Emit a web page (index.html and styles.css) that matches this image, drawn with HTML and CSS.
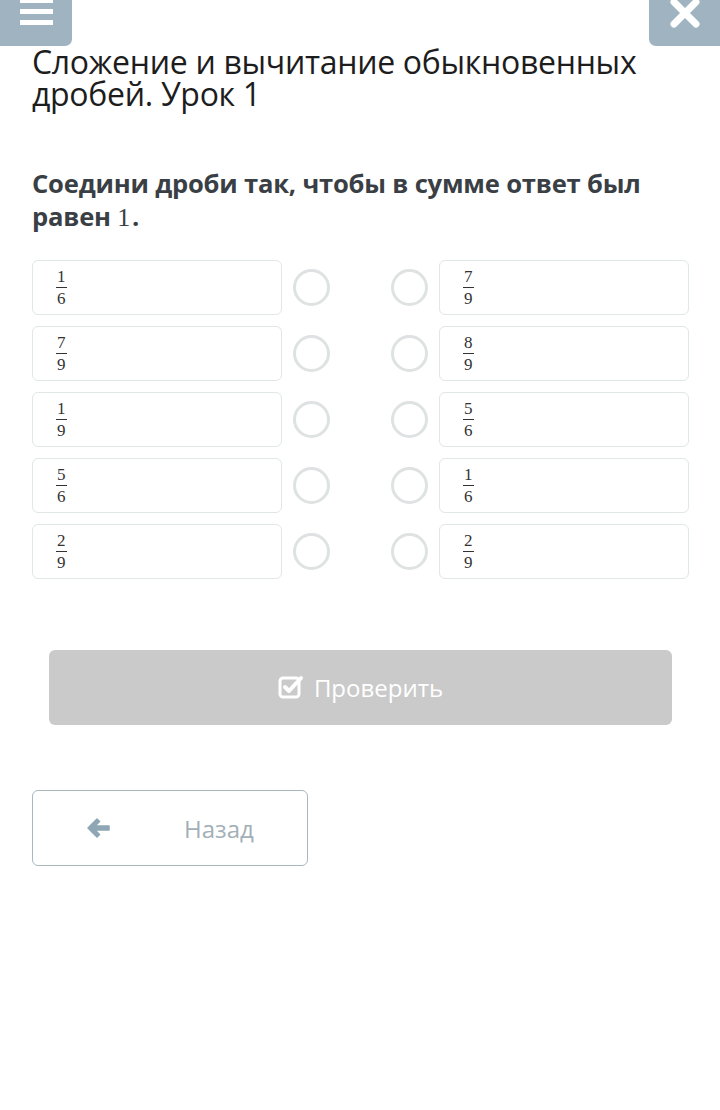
FILE: index.html
```html
<!DOCTYPE html>
<html lang="ru">
<head>
<meta charset="utf-8">
<link rel="stylesheet" href="styles.css">
</head>
<body>
<div class="topbar">
  <div class="tb-btn tb-left">
    <svg width="72" height="46" viewBox="0 0 72 46"><rect x="20" y="-2" width="33" height="5" fill="#fff"/><rect x="20" y="9" width="33" height="5" fill="#fff"/><rect x="20" y="20" width="33" height="5" fill="#fff"/></svg>
  </div>
  <div class="tb-btn tb-right">
    <svg width="71" height="46" viewBox="0 0 71 46"><path d="M25 2 L47 24 M47 2 L25 24" stroke="#fff" stroke-width="7" stroke-linecap="round"/></svg>
  </div>
</div>
<main class="content">
  <h1 class="title">Сложение и вычитание обыкновенных дробей. Урок 1</h1>
  <p class="task">Соедини дроби так, чтобы в сумме ответ был <span class="nowrap">равен <span class="math">1</span>.</span></p>
  <div class="match">
    <div class="card"><span class="frac"><span class="num">1</span><span class="den">6</span></span></div>
    <div class="dot"></div><div></div><div class="dot"></div>
    <div class="card"><span class="frac"><span class="num">7</span><span class="den">9</span></span></div>

    <div class="card"><span class="frac"><span class="num">7</span><span class="den">9</span></span></div>
    <div class="dot"></div><div></div><div class="dot"></div>
    <div class="card"><span class="frac"><span class="num">8</span><span class="den">9</span></span></div>

    <div class="card"><span class="frac"><span class="num">1</span><span class="den">9</span></span></div>
    <div class="dot"></div><div></div><div class="dot"></div>
    <div class="card"><span class="frac"><span class="num">5</span><span class="den">6</span></span></div>

    <div class="card"><span class="frac"><span class="num">5</span><span class="den">6</span></span></div>
    <div class="dot"></div><div></div><div class="dot"></div>
    <div class="card"><span class="frac"><span class="num">1</span><span class="den">6</span></span></div>

    <div class="card"><span class="frac"><span class="num">2</span><span class="den">9</span></span></div>
    <div class="dot"></div><div></div><div class="dot"></div>
    <div class="card"><span class="frac"><span class="num">2</span><span class="den">9</span></span></div>
  </div>
  <div class="check-wrap">
    <button class="check">
      <svg width="26" height="24" viewBox="0 0 26 24"><rect x="2" y="3" width="19" height="19" rx="3" fill="none" stroke="#fff" stroke-width="3"/><path d="M7 12 L11 16 L23 3" fill="none" stroke="#fff" stroke-width="4" stroke-linecap="round" stroke-linejoin="round"/></svg>
      <span>Проверить</span>
    </button>
  </div>
  <button class="back">
    <svg class="arrow" width="26" height="22" viewBox="0 0 26 22"><path d="M3 11 L12 2 L14.5 4.5 L10 9 L24 9 L24 13 L10 13 L14.5 17.5 L12 20 Z" fill="#8fa6b4" stroke="#8fa6b4" stroke-width="1.5" stroke-linejoin="round"/></svg>
    <span>Назад</span>
  </button>
</main>
</body>
</html>
```
FILE: styles.css
```css
* { box-sizing: border-box; }
html, body { margin: 0; padding: 0; background: #fff; }
body { font-family: "Open Sans", "Noto Sans", sans-serif; color: #222; width: 720px; height: 1110px; overflow: hidden; }

.topbar { display: flex; justify-content: space-between; height: 46px; }
.tb-btn { background: #9fb3c0; height: 46px; display: block; }
.tb-btn svg { display: block; }
.tb-left { width: 72px; border-bottom-right-radius: 7px; }
.tb-right { width: 71px; border-bottom-left-radius: 7px; }

.content { padding: 0 31px 0 32px; }

.title { margin: 0; padding-top: 0; font-weight: 400; font-size: 32px; line-height: 32px; letter-spacing: -0.3px; color: #1d1d1d; }

.task { margin: 57px 0 0; font-weight: 700; font-size: 25.6px; line-height: 33px; color: #3a3f45; letter-spacing: -0.2px; }
.nowrap { white-space: nowrap; }
.math { font-family: "Liberation Serif", "DejaVu Serif", serif; font-weight: 400; font-size: 26px; line-height: 33px; padding-right: 2px; }

.match { margin-top: 26px; display: grid; grid-template-columns: 250px 48px 61px 48px 250px; grid-auto-rows: 55px; row-gap: 11px; }
.card { border: 1px solid #e1e6e7; border-radius: 6px; padding-left: 22px; display: flex; align-items: center; }
.dot { width: 37px; height: 37px; border: 3px solid #dfe2e2; border-radius: 50%; align-self: center; }
.match > .dot:nth-child(5n+2) { justify-self: end; }
.match > .dot:nth-child(5n+4) { justify-self: start; }

.frac { display: inline-flex; flex-direction: column; align-items: center; font-family: "Liberation Serif", "DejaVu Serif", serif; font-size: 17px; line-height: 17px; color: #333; padding: 0 1px; }
.num { border-bottom: 1.5px solid #333; padding: 0 1px 2px; }
.den { padding-top: 2px; }

.check-wrap { padding: 0 17px; margin-top: 71px; }
.check { width: 100%; height: 75px; background: #cacaca; border: none; border-radius: 6px; display: flex; align-items: center; justify-content: center; gap: 10px; color: #fff; font-family: "Open Sans", sans-serif; font-size: 24px; padding: 0; }
.check svg { display: block; margin-top: -2px; }

.back { margin-top: 65px; width: 276px; height: 76px; border: 1px solid #a9b7bf; border-radius: 6px; background: #fff; display: flex; align-items: center; padding: 0 0 0 52px; font-family: "Open Sans", sans-serif; font-size: 24px; color: #a2afb7; }
.back .arrow { display: block; }
.back span { margin-left: 73px; }
```
